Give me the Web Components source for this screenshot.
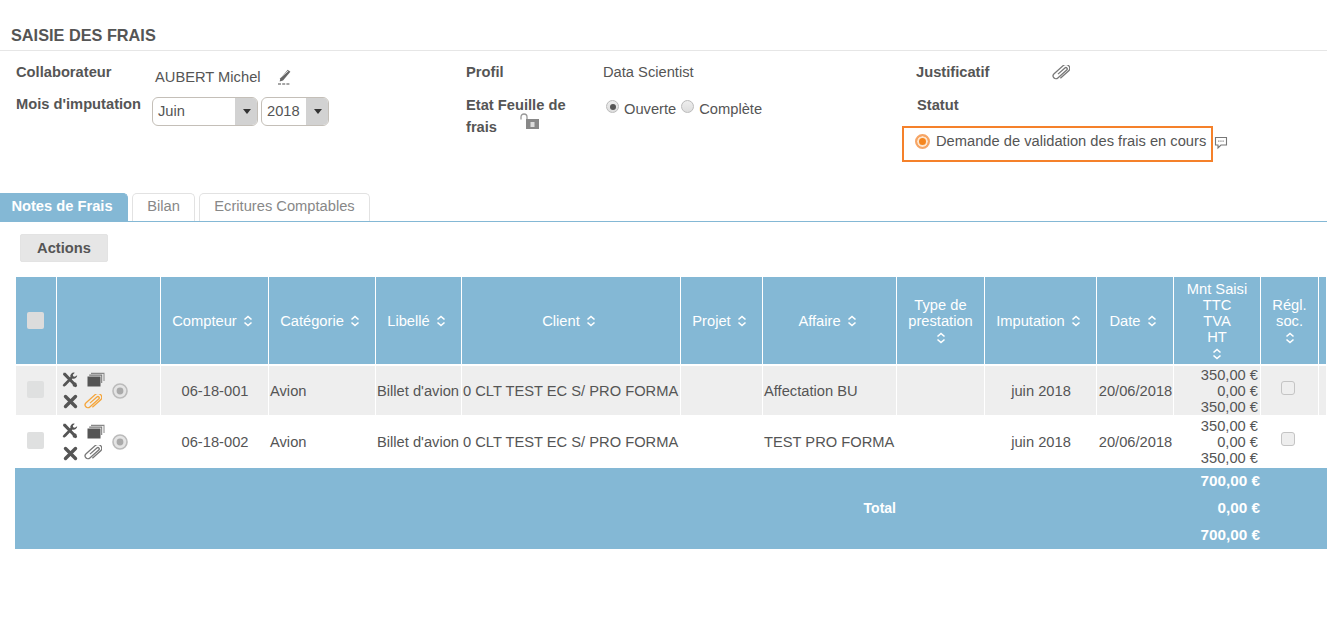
<!DOCTYPE html>
<html lang="fr"><head><meta charset="utf-8"><title>Saisie des frais</title>
<style>
html,body{margin:0;padding:0;background:#fff;overflow:hidden}
body{font:14.7px/16px "Liberation Sans",Arial,sans-serif;color:#555;width:1327px;height:624px}
</style></head><body>
<frais-app></frais-app>
<script>
const ICONS={
 pen:'<svg width="16" height="16" viewBox="0 0 16 16"><path d="M11.800 .8l2.600 2L7 11.400l-3.300 1 .6-3.200z" fill="#666"/><path d="M4.800 8.300L12.300 1.900" stroke="#fff" stroke-width=".8"/><path d="M2 15h12" stroke="#888" stroke-width="1.300" stroke-dasharray="3 1.200"/></svg>',
 clip:c=>`<svg width="18" height="16" viewBox="0 0 18 16"><g transform="rotate(-42 9 8)"><path d="M6 6.800H15.300a1.400 1.400 0 0 1 0 2.800H3.300a2.800 2.800 0 0 1 0-5.600H16a3.800 3.800 0 0 1 .6 7.500H5" fill="none" stroke="${c}" stroke-width="1.300"/></g></svg>`,
 lock:'<svg width="20" height="17" viewBox="0 0 20 17"><path d="M1 6.500V4C1 2.200 2.300 1 4 1S7 2.200 7 4V6.500" fill="none" stroke="#999" stroke-width="1.300"/><rect x="6" y="6" width="13" height="10" fill="#888"/><rect x="10.500" y="9" width="4" height="5" fill="#ddd"/></svg>',
 bubble:'<svg width="14" height="14" viewBox="0 0 14 14"><path d="M1.500 1.500h11v7.500H7L4 12V9H1.500z" fill="#fff" stroke="#777" stroke-width="1.100"/><path d="M4 5.200h6" stroke="#999" stroke-width="1.200" stroke-dasharray="1.500 .7"/></svg>',
 tools:'<svg width="16" height="16" viewBox="0 0 16 16"><path d="M1.500 .8l2 0 8.800 9.300 2 .8.900 3-1.500 1.300-2.600-1-.7-2L1 2.800z" fill="#555"/><path d="M15.200 3.300a3.500 3.500 0 0 1-4.600 3.300L4 13.500 2 14.800.6 13.300 2 11.400l6.400-6.300A3.500 3.500 0 0 1 12.800.8l-2 2 .4 1.500 1.600.5z" fill="#555"/></svg>',
 layers:'<svg width="18" height="15" viewBox="0 0 18 15"><path d="M4 2V.8h13.500V9h-1V2z" fill="#888"/><path d="M2.200 3.800V2.600h13V11h-1V3.800z" fill="#777"/><rect x="0.500" y="4.500" width="13" height="10" fill="#555"/></svg>',
 cross:'<svg width="15" height="15" viewBox="0 0 15 15"><path d="M2.500 2.500l10 10M12.500 2.500l-10 10" stroke="#555" stroke-width="3.400" stroke-linecap="round"/></svg>',
 target:'<svg width="16" height="16" viewBox="0 0 16 16"><circle cx="8" cy="8" r="7" fill="#e4e4e4" stroke="#bbb" stroke-width="1.600"/><circle cx="8" cy="8" r="3.400" fill="#aaa"/></svg>',
 sort:'<svg width="10" height="12" viewBox="0 0 10 12"><path d="M1.500 4.500L5 1.500l3.500 3M1.500 7.500L5 10.500l3.500-3" fill="none" stroke="#fff" stroke-width="1.600"/></svg>'
};
function def(name,css,html){
 customElements.define(name,class extends HTMLElement{
  connectedCallback(){
   if(this.shadowRoot)return;
   const r=this.attachShadow({mode:'open'});
   r.innerHTML=`<style>${css}</style>`+(typeof html==='function'?html(this):html);
  }
 });
}
def('app-icon',':host{display:inline-flex;line-height:0}',h=>{
 const n=h.getAttribute('name');const c=h.getAttribute('color')||'#777';
 return n==='clip'?ICONS.clip(c):ICONS[n];
});
def('form-label',':host{display:block;font-weight:bold;color:#555;line-height:22px}','<slot></slot>');
def('select-box',`:host{display:inline-flex;height:29px;box-sizing:border-box;border:1px solid #c4bfb8;border-radius:6px;overflow:hidden;background:#fff;color:#555;align-items:stretch}
 span{flex:1;padding-left:5px;line-height:26px}
 i{display:flex;width:23px;background:#d2d2d2;align-items:center;justify-content:center;margin:-1px -1px -1px 0}
 b{width:0;height:0;border:4.500px solid transparent;border-top:5px solid #333;border-bottom:0;}`,'<span><slot></slot></span><i><b></b></i>');
def('radio-dot',`:host{display:inline-block;width:13px;height:13px;box-sizing:border-box;border-radius:50%;border:1px solid #bbb;background:linear-gradient(#eee,#ddd);position:relative}
 :host([on]) i{position:absolute;left:2.500px;top:2.500px;width:6px;height:6px;border-radius:50%;background:#555}`,'<i></i>');
def('status-box',`:host{display:flex;align-items:center;width:311px;height:36px;box-sizing:border-box;border:2px solid #f5812a;padding:0 0 6px 11px;color:#555;margin-left:-14px}
 .o{width:15px;height:15px;border-radius:50%;box-sizing:border-box;border:2px solid #f6a566;background:#f5861f;box-shadow:inset 0 0 0 2px #fde6d0;margin-right:6px;flex:none}
 span{white-space:nowrap}`,'<i class="o"></i><span><slot></slot></span>');
def('form-section',`:host{display:grid;grid-template-columns:450px 450px 1fr;padding:0 0 0 16px;height:142px}
 .c{display:grid;align-content:start}
 .a{grid-template-columns:139px 1fr}
 .b,.d{grid-template-columns:137px 1fr}
 form-label{white-space:nowrap}
 .sel{display:flex;gap:3px}
 .rad{display:flex;align-items:flex-start;gap:5px;color:#555}
 .rad radio-dot{margin-top:1px}
 .rad span{margin-top:2px}
 .frais{display:flex;align-items:flex-start;gap:23px;margin-top:0}
 `,`
 <div class="c a" style="padding-top:10px">
  <form-label>Collaborateur</form-label>
  <div style="display:flex;align-items:center;gap:15px;padding-top:8px;height:16px"><span>AUBERT Michel</span><app-icon name="pen"></app-icon></div>
  <form-label style="margin-top:8px">Mois d'imputation</form-label>
  <div class="sel" style="margin-top:12px;margin-left:-3px;align-self:start">
   <select-box style="width:106px">Juin</select-box><select-box style="width:68px">2018</select-box>
  </div>
 </div>
 <div class="c b" style="padding-top:10px">
  <form-label>Profil</form-label>
  <div style="line-height:22px">Data Scientist</div>
  <div style="margin-top:11px"><form-label>Etat Feuille de</form-label><div class="frais"><form-label>frais</form-label><app-icon name="lock" style="margin-top:-3px"></app-icon></div></div>
  <div class="rad" style="margin-top:16px;align-self:start;padding-left:3px;height:22px"><radio-dot on></radio-dot><span>Ouverte</span><radio-dot></radio-dot><span>Complète</span></div>
 </div>
 <div class="c d" style="padding-top:10px">
  <form-label>Justificatif</form-label>
  <div style="padding-top:4px;margin-left:-1px"><app-icon name="clip" color="#777"></app-icon></div>
  <form-label style="margin-top:10px;grid-column:1/3;padding-left:1px">Statut</form-label>
  <div style="grid-column:1/3;display:flex;align-items:center;margin-top:10px;gap:1px"><status-box>Demande de validation des frais en cours</status-box><app-icon name="bubble" style="margin:-3px 0 0 0"></app-icon></div>
 </div>`);
def('tab-bar',`:host{display:flex;align-items:flex-end;height:29px;box-sizing:border-box;border-bottom:1px solid #84b8d5;gap:4px}
 .t{height:28px;box-sizing:border-box;border:1px solid #e2e2e2;border-bottom:0;border-radius:5px 5px 0 0;background:#fff;color:#888;text-align:center;line-height:25px}
 .a{width:128px;background:#84b8d5;border-color:#84b8d5;color:#fff;font-weight:bold;border-radius:0 5px 0 0;padding-right:4px}
 `,`<div class="t a">Notes de Frais</div><div class="t" style="width:63px">Bilan</div><div class="t" style="width:171px;margin-left:0">Ecritures Comptables</div>`);
def('action-button',`:host{display:block;width:88px;height:28px;box-sizing:border-box;background:#e6e6e6;border:1px solid #e3e3e3;border-radius:2px;font-weight:bold;color:#555;text-align:center;line-height:26px}`,'<slot></slot>');
def('row-icons',`:host{display:grid;grid-template-columns:25px 25px 20px;grid-template-rows:22px 22px;width:70px;align-items:center;justify-items:start;margin:0 0 0 5px}
 .t{grid-column:3;grid-row:1/3}
 .x{margin-left:1px}
 .p{margin-left:-3px}
 `,h=>`<app-icon name="tools"></app-icon><app-icon name="layers"></app-icon><app-icon class="t" name="target"></app-icon><app-icon class="x" name="cross"></app-icon><app-icon class="p" name="clip" color="${h.getAttribute('clip')||'#777'}"></app-icon>`);
const sort='<app-icon name="sort"></app-icon>';
function row(cls,clip,aff){return `<tr class="${cls}">
 <td class="c"><i class="ck"></i></td><td class="ic"><row-icons clip="${clip}"></row-icons></td>
 <td class="m">06-18-00${cls==='r1'?1:2}</td><td>Avion</td><td>Billet d'avion</td><td>0 CLT TEST EC S/ PRO FORMA</td><td></td><td>${aff}</td><td></td><td class="m">juin 2018</td><td class="m">20/06/2018</td>
 <td class="amt">350,00 €<br>0,00 €<br>350,00 €</td><td class="c"><i class="sm"></i></td><td></td></tr>`}
def('frais-table',`:host{display:block;margin:15px 0 0 16px;width:1311px}
 table{border-collapse:separate;border-spacing:0;table-layout:fixed;width:1311px;color:#555}
 th{background:#84b8d5;color:#fff;font-weight:normal;height:89px;box-sizing:border-box;border-right:1px solid #fff;border-bottom:2px solid #fff;padding:0 4px 0 0;text-align:center;vertical-align:middle;line-height:16px}
 th.st,th.n{padding:0}
 th span{white-space:nowrap}
 th app-icon{margin-left:6px;vertical-align:-1px}
 th.st app-icon{display:flex;margin:3px 0 0;justify-content:center}
 td{border-right:1px solid #fff;padding:0 0 0 1px;white-space:nowrap;overflow:hidden;line-height:16px;vertical-align:middle;box-sizing:border-box}
 tr.r1 td{background:#eee;height:50px;border-bottom:1px solid #fff}
 tr.r2 td{background:#fff;height:52px}
 td.m{text-align:center}
 td.c{text-align:center;padding:0}
 td.ic{padding:0}
 td.amt{text-align:right;padding-right:2px}
 .ck{display:inline-block;width:17px;height:17px;background:#dfe0e0;border-radius:2px;vertical-align:middle;margin:-5px 2px 0 0}
 th .ck{background:#dcdcdc;border:0;margin-top:0}
 .sm{display:inline-block;width:12px;height:12px;border:1px solid #c4c4c4;border-radius:3px;background:#eee;vertical-align:middle;margin:-8px 3px 0 0}
 tfoot td{background:#84b8d5;color:#fff;font-weight:bold;height:27px;border:0;padding:0 0 2px 0;text-align:right}
 tfoot td.a{font-size:15.300px;padding-right:1px}
 tfoot td.tot{font-size:14px;padding-right:1px;box-shadow:-1px 0 0 #84b8d5}
 `,`<table><colgroup><col style="width:41px"><col style="width:104px"><col style="width:108px"><col style="width:107px"><col style="width:86px"><col style="width:219px"><col style="width:82px"><col style="width:134px"><col style="width:88px"><col style="width:112px"><col style="width:77px"><col style="width:87px"><col style="width:58px"><col></colgroup>
 <thead><tr>
 <th class="n"><i class="ck"></i></th><th></th>
 <th><span>Compteur</span>${sort}</th><th><span>Catégorie</span>${sort}</th><th><span>Libellé</span>${sort}</th><th><span>Client</span>${sort}</th><th><span>Projet</span>${sort}</th><th><span>Affaire</span>${sort}</th>
 <th class="st"><span>Type de<br>prestation</span>${sort}</th><th><span>Imputation</span>${sort}</th><th><span>Date</span>${sort}</th>
 <th class="st"><span>Mnt Saisi<br>TTC<br>TVA<br>HT</span>${sort}</th><th class="st"><span>Régl.<br>soc.</span>${sort}</th><th></th>
 </tr></thead>
 <tbody>${row('r1','#f5a53a','Affectation BU')}${row('r2','#777','TEST PRO FORMA')}</tbody>
 <tfoot><tr><td colspan="8" rowspan="3" class="tot">Total</td><td colspan="3" rowspan="3"></td><td class="a">700,00 €</td><td colspan="2" rowspan="3"></td></tr><tr><td class="a">0,00 €</td></tr><tr><td class="a">700,00 €</td></tr></tfoot></table>`);
def('page-title',`:host{display:block;height:51px;box-sizing:border-box;border-bottom:1px solid #e6e6e6;padding:27px 0 0 11px;font-weight:bold;color:#555;font-size:16.300px;line-height:16px}`,'<slot></slot>');
def('frais-app',`:host{display:block;width:1327px}
 action-button{margin:12px 0 0 20px}`,`<page-title>SAISIE DES FRAIS</page-title><form-section></form-section><tab-bar></tab-bar><action-button>Actions</action-button><frais-table></frais-table>`);
</script>
</body></html>
